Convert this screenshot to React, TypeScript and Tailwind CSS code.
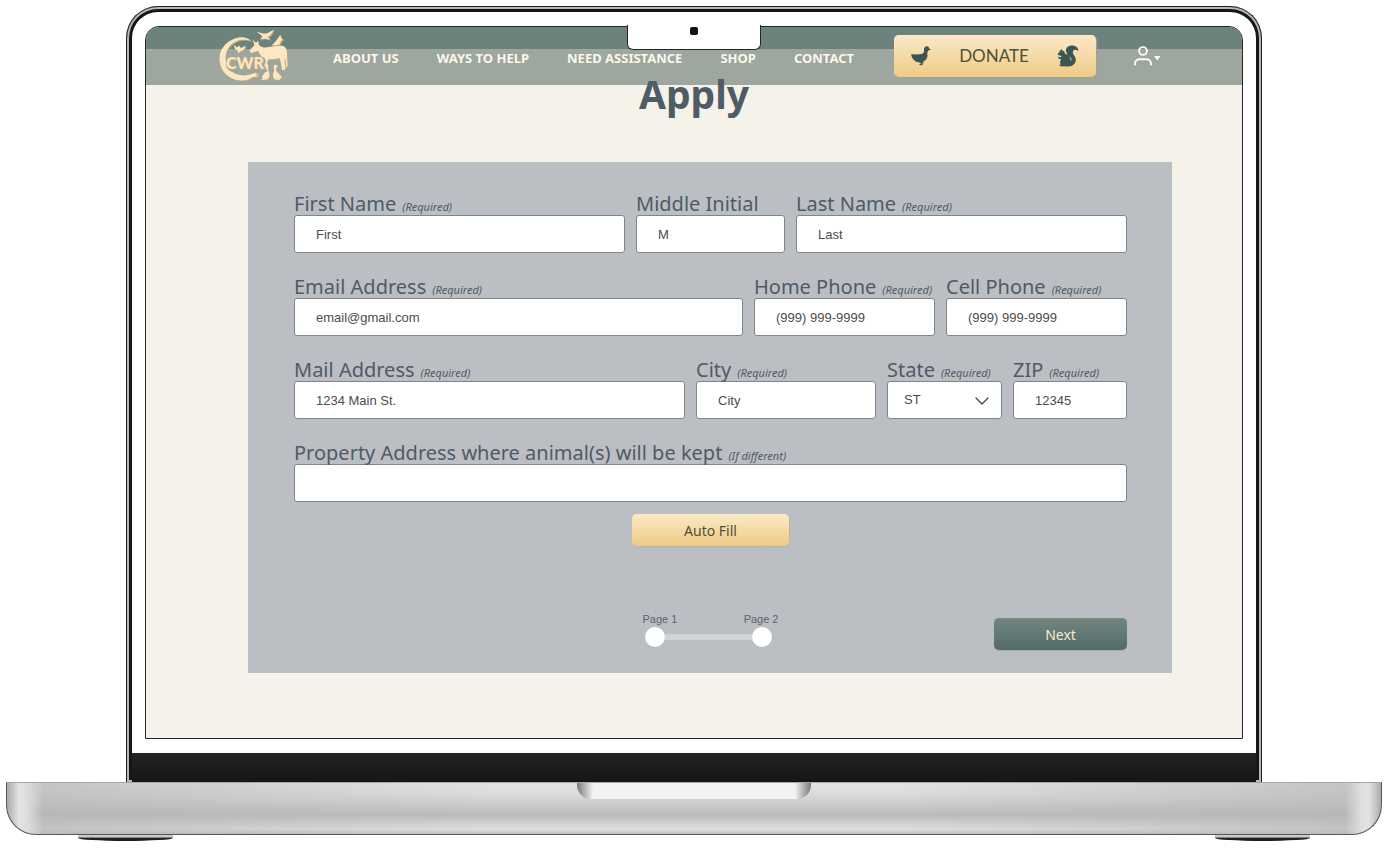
import React from "react";

const NAV_LINKS = ["About Us", "Ways to Help", "Need Assistance", "Shop", "Contact"];

const FIELD =
  "block h-[38px] w-full rounded-[3px] border border-[#7d868b] bg-white font-['Liberation_Sans',sans-serif] text-[13px] text-[#4c4c4e] placeholder:text-[#4c4c4e] placeholder:opacity-100";

function Label({ id, text, note }: { id: string; text: string; note?: string }) {
  return (
    <label htmlFor={id} className="flex h-[22px] items-baseline gap-1.5 whitespace-nowrap text-[20px] leading-[22px] text-[#4f5b66]">
      {text}
      {note && <span className="text-[11px] italic">{note}</span>}
    </label>
  );
}

function Field({
  id,
  text,
  note,
  placeholder,
}: {
  id: string;
  text: string;
  note?: string;
  placeholder?: string;
}) {
  return (
    <div className="min-w-0">
      <Label id={id} text={text} note={note} />
      <input id={id} name={id} placeholder={placeholder} className={`${FIELD} px-[21px]`} />
    </div>
  );
}

function StateField() {
  return (
    <div className="relative min-w-0">
      <Label id="state" text="State" note="(Required)" />
      <select id="state" name="state" className={`${FIELD} appearance-none px-4`} defaultValue="ST">
        <option>ST</option>
        <option>CA</option>
        <option>NY</option>
        <option>TX</option>
      </select>
      <svg viewBox="0 0 14 8" className="pointer-events-none absolute right-[13px] bottom-[14px] h-2 w-3.5" fill="none" stroke="#3f4d57" strokeWidth="1.4">
        <path d="M1 1l6 6 6-6" strokeLinecap="round" strokeLinejoin="round" />
      </svg>
    </div>
  );
}

function LogoShapes() {
  return (
    <>
      <path d="M32 12C29 8 22 7 16 9.500C6 13 0 21 .5 31C1 42 10 51 22 51.500C27 51.800 31 50 34 48L40 47.500L36 46L41 45L36 44.500L38 43C31 46 26 47 21 46C12 44.500 6.500 38 6.500 29C6.500 19 14 11.500 23 10.800C27 10.400 30 11 32 12Z" />
      <path d="M30.500 21.500L35.500 16L33.500 10.500L37 14L39 11.500L39.500 15.500C42 18.300 44 18.800 48 18.300C54 17.300 59 16.500 64 17C67 18 68 21 68 25L68.500 37L67 38.500L66.500 29L65.500 32L66.500 40L63 41.500L62 34L60.500 29C56 30.500 53 30.500 49.500 30L48 34L48 41.500L45.500 41.500L45 34L44 41.500L41.500 41.500L42 27L39 22L35 23L32 24Z" />
      <path d="M37 2.500L44 4.500L48 4.500L55 .5L51.500 6L48.500 8L51.500 10.500L45 9.500L41 10.500L43.500 7.500L41 5Z" />
      <path d="M52.500 16.500L57 12L61.500 5.500L62 9L64 10L62 12L60.500 15.500L57 16Z" />
      <path d="M14.500 16L18.500 18.500L20 16.500L22 19L27 16.500L24.500 21L21 22.500L19.500 24.500L18.500 21.500L16 20Z" />
      <path d="M47 35.500C48.500 34.500 50 36 49 38L49.500 42C51 45 51 48.500 48 50.500L42 51L44 49L43 48.500C43 45.500 46 44 47.500 42L47 38L45.500 37Z" />
      <path d="M57 36C55.500 35 54 36.500 55 38.500L55 42C53.500 45 53.500 48.500 56 50.500L61 51L60.500 49.500L63 49C62 46 58.500 44 57 41.500L57.500 38L59 37.500Z" />
    </>
  );
}

function Logo() {
  return (
    <svg viewBox="0 0 71 54" className="h-[54px] w-[71px] shrink-0" role="img" aria-label="CWR">
      <g transform="translate(1 1)" fill="#c3a56f">
        <LogoShapes />
      </g>
      <g fill="#fde7c3">
        <LogoShapes />
      </g>
      <g fontFamily="Lato, sans-serif" fontWeight="900" fontSize="16">
        <text x="8" y="41" fill="#c3a56f" stroke="#9ca59e" strokeWidth="3" paintOrder="stroke">CWR</text>
        <text x="7" y="40" fill="#fde7c3">CWR</text>
      </g>
    </svg>
  );
}

function Duck() {
  return (
    <svg viewBox="0 0 20 20" className="size-5 shrink-0" fill="#3b5652" aria-hidden="true">
      <path d="M16 .2C13.700 .2 12.700 2 13 4C13.200 6 12.600 7.500 10.500 8L6 8.500L.2 8.200C.3 11.500 3 15.500 7.500 16.300C12.500 17 16.500 13.500 16.500 9.500C16.400 8 16 6.500 17 5C17.400 4.300 18 4 20 3.700L18.200 2.500C18 1 17.200 .2 16 .2Z" />
      <path d="M8.500 16L10 18L8 18.300L9 19.200L12 19L11 17.500L13 17.300L11.500 15.500Z" />
    </svg>
  );
}

function Squirrel() {
  return (
    <svg viewBox="0 0 22 22" className="size-[22px] shrink-0" fill="#3b5652" aria-hidden="true">
      <path d="M15 .5C11 .5 8.800 3 9 5.500C9.200 7.500 10 9 11.500 10.500C13.500 12.500 14.800 13.500 14.500 15.500L13.500 15.200C13.500 12 11.500 9.500 8 8.800L7.300 6.500L5.500 5.500L4.500 4L3.800 5.500L2.500 5L2.800 6.800L.8 8.500C.4 9.700 1.200 10.500 3 10.500L4.500 11L3.500 12.500L1.300 11.800L1 13L3.500 14.500L4.500 14.300C2.800 16 2.500 18 3.800 19.300L2.300 20L3 21.300L11 21.500C16 21.500 18.800 18.500 18.800 14.500C18.800 11.500 15.800 9.800 15.800 7.300C15.800 4.500 18.500 4 21.300 6C21.500 2.800 19 .5 15 .5Z" />
    </svg>
  );
}

function NavBar() {
  return (
    <header className="relative flex h-[58px] items-center bg-linear-to-b from-[#6c827c] from-[22px] to-[#9da69f] to-[22px] pl-[73px]">
      <Logo />
      <nav className="ml-[43px] flex w-[521px] items-center justify-between pt-1">
        {NAV_LINKS.map((link) => (
          <a key={link} href="#" className="text-[13px] leading-4 font-bold whitespace-nowrap text-[#fbf7ea] uppercase">
            {link}
          </a>
        ))}
      </nav>
      <button
        type="button"
        className="ml-10 flex h-[42px] w-[202px] items-center justify-between rounded-[5px] bg-linear-to-b from-[#fbe9c8] to-[#eecb85] px-[17px] font-[Lato,sans-serif] text-[17px] text-[#4c5236] shadow-[inset_0_1px_1px_#f3ead2,1px_1px_1px_#b3a273]"
      >
        <Duck />
        DONATE
        <Squirrel />
      </button>
      <button type="button" aria-label="Account" className="ml-[37px] flex items-center">
        <svg viewBox="0 0 29 20" className="h-5 w-[29px]" aria-hidden="true">
          <g fill="none" stroke="#fcfaf2" strokeWidth="1.900" strokeLinecap="round">
            <circle cx="10" cy="5" r="3.900" />
            <path d="M2 18.500v-.7c0-2.800 2.200-4.500 4.800-4.500h6.400c2.600 0 4.800 1.700 4.800 4.500v.7" />
          </g>
          <path d="M21 10h6.600l-3.300 4.500z" fill="#fcfaf2" />
        </svg>
      </button>
    </header>
  );
}

function PageSteps() {
  return (
    <div className="flex w-[136px] flex-col">
      <div className="flex justify-between font-['Liberation_Sans',sans-serif] text-[11px] leading-4 text-[#5b636d]">
        <span>Page 1</span>
        <span>Page 2</span>
      </div>
      <div className="mr-[7px] ml-0.5 flex items-center">
        <span className="size-5 rounded-full bg-white" />
        <span className="h-1.5 flex-1 bg-[#d2d4d7]" />
        <span className="size-5 rounded-full bg-white" />
      </div>
    </div>
  );
}

function ApplyForm() {
  return (
    <form className="mr-[70px] ml-[102px] bg-[#bbbfc4] pt-[31px] pr-[45px] pb-[23px] pl-[46px]" onSubmit={(e) => e.preventDefault()}>
      <div className="flex flex-col gap-[23px]">
        <div className="grid grid-cols-[331fr_149fr_331fr] gap-[11px]">
          <Field id="first-name" text="First Name" note="(Required)" placeholder="First" />
          <Field id="middle-initial" text="Middle Initial" placeholder="M" />
          <Field id="last-name" text="Last Name" note="(Required)" placeholder="Last" />
        </div>
        <div className="grid grid-cols-[449fr_181fr_181fr] gap-[11px]">
          <Field id="email" text="Email Address" note="(Required)" placeholder="email@gmail.com" />
          <Field id="home-phone" text="Home Phone" note="(Required)" placeholder="(999) 999-9999" />
          <Field id="cell-phone" text="Cell Phone" note="(Required)" placeholder="(999) 999-9999" />
        </div>
        <div className="grid grid-cols-[391fr_180fr_115fr_114fr] gap-[11px]">
          <Field id="mail-address" text="Mail Address" note="(Required)" placeholder="1234 Main St." />
          <Field id="city" text="City" note="(Required)" placeholder="City" />
          <StateField />
          <Field id="zip" text="ZIP" note="(Required)" placeholder="12345" />
        </div>
        <Field id="property-address" text="Property Address where animal(s) will be kept" note="(If different)" />
      </div>
      <button
        type="button"
        className="mx-auto mt-3 block h-8 w-[157px] rounded-[5px] bg-linear-to-b from-[#fbe9c6] to-[#eecb84] text-[14px] text-[#4c5236] shadow-[inset_0_1px_1px_#f0ead8,1px_1px_1px_#c5b48c]"
      >
        Auto Fill
      </button>
      <div className="mt-16 grid grid-cols-[1fr_auto_1fr] items-end">
        <span />
        <div className="mb-[3px]">
          <PageSteps />
        </div>
        <button
          type="submit"
          className="mt-2 h-8 w-[133px] justify-self-end rounded-[5px] bg-linear-to-b from-[#72877f] to-[#526a68] text-[14px] text-[#f8ead0] shadow-[inset_0_1px_1px_#7d8c8c,0_1px_1px_#a4acae]"
        >
          Next
        </button>
      </div>
    </form>
  );
}

function Base() {
  return (
    <div>
      <div className="flex h-[53px] justify-center rounded-b-[30px] border border-[#55585a] border-t-[#a4a6a8] bg-[linear-gradient(90deg,#a9abad_0,#e2e3e4_12px,#dcddde_20px,transparent_36px,transparent_calc(100%-36px),#dcddde_calc(100%-20px),#e2e3e4_calc(100%-12px),#a9abad_100%),linear-gradient(90deg,#b3b5b7b0_0,#adafb100_35%,#adafb100_65%,#b3b5b7b0_100%),linear-gradient(#e2e3e4_0,#d8d9db_25%,#b9bbbd_62%,#dedfe0_90%,#c0c2c4_100%)]">
        <div className="h-4 w-[234px] rounded-b-[14px] bg-[linear-gradient(90deg,#77797b_0,#f3f2f0_16px,#f3f2f0_calc(100%-16px),#77797b_100%)]" />
      </div>
      <div className="flex justify-between px-[72px]">
        <span className="h-[6px] w-[95px] rounded-b-[50%] bg-linear-to-b from-[#c9cbcc] from-30% to-[#1c1c1d] to-60%" />
        <span className="h-[6px] w-[95px] rounded-b-[50%] bg-linear-to-b from-[#c9cbcc] from-30% to-[#1c1c1d] to-60%" />
      </div>
    </div>
  );
}

export default function App() {
  return (
    <main className="min-h-screen bg-white px-1.5 pt-1.5 font-['Noto_Sans',sans-serif]">
      <div className="relative mx-[120px] rounded-t-[32px] border border-b-0 border-[#1d1e1e] bg-white px-[5px] pt-[5px] shadow-[inset_0_0_0_2px_#b4b8b7,inset_0_0_0_5px_#151616]">
        <div className="px-[13px] pt-3.5 pb-3.5">
          <div className="overflow-hidden rounded-t-[14px] border border-[#252727] bg-[#f5f2e9] pb-[65px]">
            <NavBar />
            <h1 className="relative mb-[59px] text-center text-[39px] leading-[18px] font-bold text-[#4f5c66]">Apply</h1>
            <ApplyForm />
          </div>
        </div>
        <div className="absolute top-[18px] left-1/2 h-[25px] w-[134px] -translate-x-1/2 rounded-b-[6px] border border-t-0 border-[#252727] bg-white" />
        <span className="absolute top-5 left-1/2 size-2 -translate-x-1/2 rounded-[2px] bg-[#111314]" />
        <div className="h-[29px] bg-linear-to-b from-[#252525] to-[#151515]" />
      </div>
      <Base />
    </main>
  );
}
